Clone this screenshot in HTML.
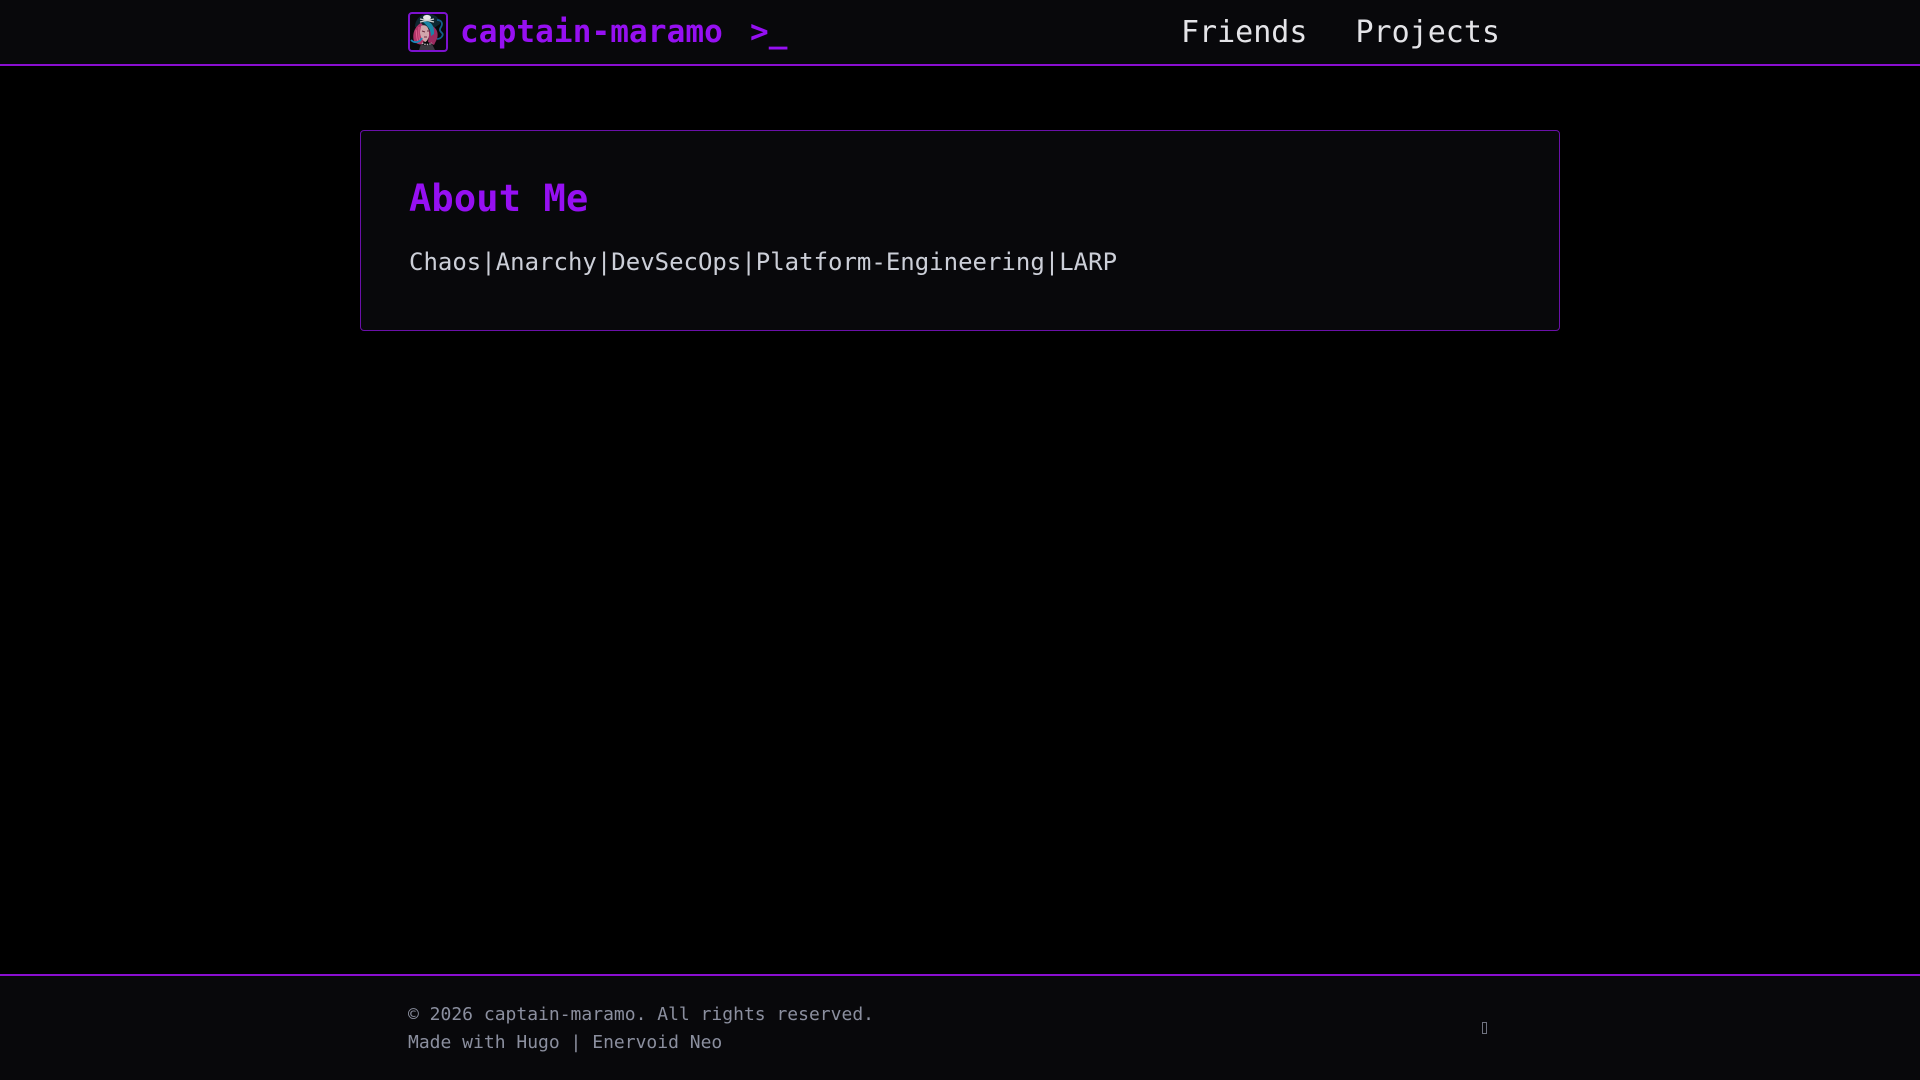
<!DOCTYPE html>
<html lang="en">
<head>
<meta charset="utf-8">
<title>captain-maramo</title>
<style>
html,body{margin:0;padding:0;width:1920px;height:1080px;overflow:hidden;background:#000;font-family:"DejaVu Sans Mono","Liberation Mono",monospace}
.abs{position:absolute;white-space:pre;line-height:1}
#hdr{position:absolute;left:0;top:0;width:1920px;height:64px;background:#08080b;border-bottom:2px solid #8a0fd0}
#ftr{position:absolute;left:0;top:974px;width:1920px;height:104px;background:#08080b;border-top:2px solid #8a0fd0}
#logo{position:absolute;left:408px;top:12px;width:36px;height:36px;border:2px solid #7d12cf;border-radius:4px;overflow:hidden;background:#08080b}
#card{position:absolute;left:360px;top:130px;width:1198px;height:199px;background:#08080b;border:1px solid #6a10a8;border-radius:4px}
#tofu{position:absolute;left:1482px;top:1022px;width:3px;height:10px;border:1px solid #6f7280}
</style>
</head>
<body>
<div id="hdr"></div>
<div id="logo">
<svg width="36" height="36" viewBox="0 0 36 36">
<path d="M5 13C5 5 11 0 18 0s12 4 12 10l-6 4H9z" fill="#0d2630"/>
<ellipse cx="17" cy="3.5" rx="4" ry="2.6" fill="#e6e6e6"/>
<path d="M10 5l14 3M24 5l-14 3" stroke="#cfcfcf" stroke-width="1.2"/>
<path d="M11 9C4 13 2 21 4 27c2 3 6 4 9 3l3-15z" fill="#b23468"/>
<path d="M6 16c1 4 0 8 2 11M9 13c0 5-1 9 1 14" stroke="#e0608c" stroke-width="1" fill="none"/>
<path d="M20 11c6 2 9 7 7 14l-3 6-6-3z" fill="#9c2b60"/>
<path d="M11 12c4-2 7 0 8 5v5c-1 4-3 6-4 6-3-2-5-6-5-10z" fill="#d2a6ac"/>
<path d="M13 8c6-2 12 2 11 12l-3 2c0-5-2-9-8-14z" fill="#1a86a6"/>
<path d="M27 6c5 0 6 4 4 7s-1 4 1 6-1 6-5 6" fill="none" stroke="#145f8c" stroke-width="1.8"/>
<path d="M1 26c4 4 9 2 11-2" fill="none" stroke="#1a88b8" stroke-width="1.8"/>
<path d="M11 30c3 2 8 2 11 0l3 6H9z" fill="#3c3840"/>
<path d="M12 29c3 2 7 2 10 0" fill="none" stroke="#b8b0b8" stroke-width="1.4" stroke-dasharray="1.5 1"/>
<path d="M12 17l3 1M17 17l2 0M14 23l3 0" stroke="#6a2c40" stroke-width="1"/>
</svg>
</div>
<div class="abs" style="left:460px;top:17px;font-size:31px;font-weight:700;letter-spacing:.12px;color:#9610f2">captain-maramo</div>
<div class="abs" style="left:750px;top:17px;font-size:31px;font-weight:700;letter-spacing:.12px;color:#9610f2">&gt;_</div>
<div class="abs" style="left:1181px;top:17.5px;font-size:30px;color:#e4e4e8">Friends</div>
<div class="abs" style="left:1355.5px;top:17.5px;font-size:30px;color:#e4e4e8">Projects</div>
<div id="card"></div>
<div class="abs" style="left:409px;top:180px;font-size:37px;font-weight:700;letter-spacing:.15px;color:#9610f2">About Me</div>
<div class="abs" style="left:409px;top:250px;font-size:24px;color:#cccfd8">Chaos|Anarchy|DevSecOps|Platform-Engineering|LARP</div>
<div id="ftr"></div>
<div class="abs" style="left:408px;top:1006px;font-size:18px;color:#8b8f9f">© 2026 captain-maramo. All rights reserved.</div>
<div class="abs" style="left:408px;top:1034px;font-size:18px;color:#8b8f9f">Made with Hugo | Enervoid Neo</div>
<div id="tofu"></div>
</body>
</html>
